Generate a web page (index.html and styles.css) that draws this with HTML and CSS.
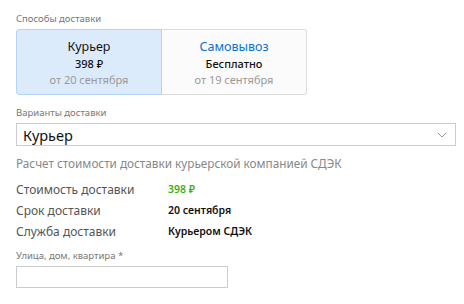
FILE: index.html
```html
<!DOCTYPE html>
<html lang="ru">
<head>
    <meta charset="UTF-8">
    <meta name="viewport" content="width=device-width, initial-scale=1.0">
    <title>Доставка</title>
    <link rel="stylesheet" href="styles.css">
</head>
<body>
    <div class="checkout">
        <div class="field-label">Способы доставки</div>
        <div class="methods">
            <div class="method active">
                <div class="method-title">Курьер</div>
                <div class="method-price">398 ₽</div>
                <div class="method-date">от 20 сентября</div>
            </div>
            <div class="method">
                <div class="method-title link">Самовывоз</div>
                <div class="method-price">Бесплатно</div>
                <div class="method-date">от 19 сентября</div>
            </div>
        </div>

        <div class="field-label">Варианты доставки</div>
        <div class="select">
            <span>Курьер</span>
            <svg class="chevron" width="10" height="6" viewBox="0 0 10 6">
                <path d="M1 1l4 4 4-4" fill="none" stroke="#999" stroke-width="1"/>
            </svg>
        </div>

        <p class="note">Расчет стоимости доставки курьерской компанией СДЭК</p>

        <div class="summary">
            <div class="summary-row">
                <span class="summary-key">Стоимость доставки</span>
                <span class="summary-val price">398 ₽</span>
            </div>
            <div class="summary-row">
                <span class="summary-key">Срок доставки</span>
                <span class="summary-val">20 сентября</span>
            </div>
            <div class="summary-row">
                <span class="summary-key">Служба доставки</span>
                <span class="summary-val">Курьером СДЭК</span>
            </div>
        </div>

        <div class="field-label">Улица, дом, квартира *</div>
        <input class="text-input" type="text">
    </div>
</body>
</html>
```

FILE: styles.css
```css
* {
    margin: 0;
    padding: 0;
    box-sizing: border-box;
}
body {
    background: #fff;
    font-family: 'Noto Sans', 'Open Sans', sans-serif;
    color: #222;
}
.checkout {
    padding: 12px 8px 0 16px;
}
.field-label {
    font-size: 9.5px;
    line-height: 14px;
    color: #777;
    margin-bottom: 3px;
}
.methods {
    display: flex;
    width: 291px;
    height: 66px;
    margin-top: 1px;
    margin-bottom: 11px;
}
.method {
    flex: 1;
    text-align: center;
    border: 1px solid #ddd;
    border-left: none;
    border-radius: 0 3px 3px 0;
    background: #fbfbfb;
    padding-top: 8px;
}
.method.active {
    background: #dcebfc;
    border: 1px solid #b5d3f3;
    border-radius: 3px 0 0 3px;
}
.method-title {
    font-size: 12.5px;
    line-height: 18px;
    color: #111;
}
.method-title.link {
    color: #0a74d8;
}
.method-price {
    font-size: 11px;
    line-height: 16px;
    font-weight: 500;
    color: #111;
}
.method-date {
    font-size: 11px;
    line-height: 16px;
    color: #999;
}
.select {
    display: flex;
    align-items: center;
    justify-content: space-between;
    height: 23px;
    border: 1px solid #ccc;
    padding: 0 8px 0 6px;
    font-size: 14.5px;
    color: #111;
    margin-bottom: 9px;
}
.note {
    font-size: 11.75px;
    line-height: 16px;
    color: #888;
    margin-bottom: 8px;
}
.summary {
    margin-bottom: 7px;
}
.summary-row {
    display: flex;
    line-height: 21px;
}
.summary-key {
    width: 152px;
    font-size: 12px;
    color: #555;
}
.summary-val {
    font-size: 10.5px;
    font-weight: 600;
    color: #111;
}
.summary-val.price {
    color: #3fae16;
}
.text-input {
    display: block;
    width: 212px;
    height: 22px;
    border: 1px solid #ccc;
}
```
